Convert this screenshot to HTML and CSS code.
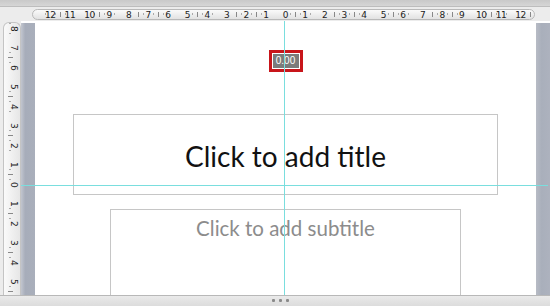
FILE: index.html
```html
<!DOCTYPE html>
<html>
<head>
<meta charset="utf-8">
<link rel="stylesheet" href="styles.css">
</head>
<body>
<div class="window">
  <div class="topbar"></div>
  <div class="ruler-row">
    <div class="hruler">
      <span>12</span><span>11</span><span>10</span><span>9</span><span>8</span><span>7</span><span>6</span><span>5</span><span>4</span><span>3</span><span>2</span><span>1</span><span>0</span><span>1</span><span>2</span><span>3</span><span>4</span><span>5</span><span>6</span><span>7</span><span>8</span><span>9</span><span>10</span><span>11</span><span>12</span>
    </div>
  </div>
  <div class="main">
    <div class="vcol">
      <div class="vruler">
        <span>8</span><span>7</span><span>6</span><span>5</span><span>4</span><span>3</span><span>2</span><span>1</span><span>0</span><span>1</span><span>2</span><span>3</span><span>4</span><span>5</span>
      </div>
    </div>
    <div class="stage">
      <div class="strip left"></div>
      <div class="canvas">
        <div class="marker"><span>0.00</span></div>
        <div class="title-box">Click to add title</div>
        <div class="sub-box">Click to add subtitle</div>
      </div>
      <div class="strip right"><div class="blue"></div></div>
      <div class="guide-v"></div>
      <div class="guide-h"></div>
    </div>
  </div>
  <div class="bottombar"><i></i><i></i><i></i></div>
</div>
</body>
</html>
```

FILE: styles.css
```css
* { box-sizing: border-box; }
html, body { margin: 0; padding: 0; }
body { width: 550px; height: 306px; overflow: hidden; background: #ececec; font-family: "Liberation Sans", Arial, sans-serif; }
.window { width: 550px; height: 306px; display: flex; flex-direction: column; }
.topbar { height: 7px; background: linear-gradient(#c9c9c9, #d6d6d6); border-bottom: 1px solid #bdbdbd; flex: none; }
.ruler-row { height: 14px; flex: none; background: #ececec; padding: 2px 0 0 32px; }
.hruler {
  width: 503px; height: 11px; border: 1px solid #b9b9b9; border-radius: 6px;
  background:
    repeating-linear-gradient(90deg, transparent 0 19px, #888 19px 19.6px) 7.5px 2px / 490px 5px no-repeat,
    repeating-linear-gradient(90deg, transparent 0 4.4px, #aaa 4.4px 5px, transparent 5px 9.8px) 7.5px 3px / 490px 2px no-repeat,
    linear-gradient(#fafafa, #e2e2e2);
  display: flex; padding-left: 7.5px;
}
.hruler span { width: 19.6px; flex: none; text-align: center; font-size: 9px; line-height: 10px; color: #222; font-family: "DejaVu Sans", sans-serif; letter-spacing: -0.4px; }
.main { flex: 1; display: flex; min-height: 0; }
.vcol { width: 21px; flex: none; padding: 1px 0 0 3px; background: #ececec; display: flex; }
.vruler {
  width: 14px; flex: 1; border: 1px solid #c4c4c4; border-bottom: none; border-radius: 6px 6px 0 0;
  background:
    repeating-linear-gradient(180deg, transparent 0 19px, #888 19px 19.5px) 4px -4.25px / 5px 300px no-repeat,
    repeating-linear-gradient(180deg, transparent 0 4.4px, #aaa 4.4px 5px, transparent 5px 9.75px) 5px -4.25px / 2px 300px no-repeat,
    linear-gradient(90deg, #fafafa, #e6e6e6);
  display: flex; flex-direction: column; overflow: hidden;
}
.vruler span { height: 19.5px; flex: none; writing-mode: vertical-rl; text-align: center; font-size: 9px; line-height: 12px; color: #222; font-family: "DejaVu Sans", sans-serif; }
.vruler span:first-child { margin-top: -4.25px; }
.stage { flex: 1; display: flex; position: relative; background: #fff; padding-top: 2px; overflow: hidden; }
.strip { width: 14px; flex: none; background: linear-gradient(90deg, #c2c6cf, #a7adba 30%, #a9afbb); position: relative; }
.strip.right { background: linear-gradient(90deg, #b8bcc5, #a9afbb 40%, #adb2be); }
.blue { position: absolute; right: -2px; top: 26px; width: 2px; bottom: 0; background: #3f63c9; }
.canvas { flex: 1; background: #fff; display: flex; flex-direction: column; align-items: center; margin-top: -2px; overflow: hidden; }
.marker { flex: none; margin-top: 29px; width: 34px; height: 22px; border: 3px solid #c8151a; padding: 1px; background: #fff; display: flex; }
.marker span { flex: 1; background: #7b7b7b; color: #fff; font-size: 10px; line-height: 14px; text-align: center; font-family: "Liberation Sans", sans-serif; }
.title-box { flex: none; margin-top: 42px; width: 425px; height: 81px; border: 1px solid #c6c6c6; display: flex; align-items: center; justify-content: center; font-family: Lato, "Open Sans", sans-serif; font-size: 28px; color: #111; padding-top: 2px; }
.sub-box { flex: none; margin-top: 14px; width: 351px; height: 120px; border: 1px solid #c6c6c6; text-align: center; font-family: Lato, "Open Sans", sans-serif; font-size: 20.5px; color: #8c8c8c; padding-top: 6px; }
.guide-v { position: absolute; z-index: 2; left: 263px; top: 0; bottom: 0; width: 1px; background: #7adede; }
.guide-h { position: absolute; z-index: 2; left: 0; right: 2px; top: 164px; height: 1px; background: #7adede; }
.bottombar { height: 11px; flex: none; background: linear-gradient(#eaeaea, #dcdcdc); border-top: 1px solid #b8b8b8; display: flex; justify-content: center; gap: 4px; padding-top: 3px; padding-left: 10px; }
.bottombar i { width: 3px; height: 3px; background: #8a8a8a; border-radius: 1px; }
```
